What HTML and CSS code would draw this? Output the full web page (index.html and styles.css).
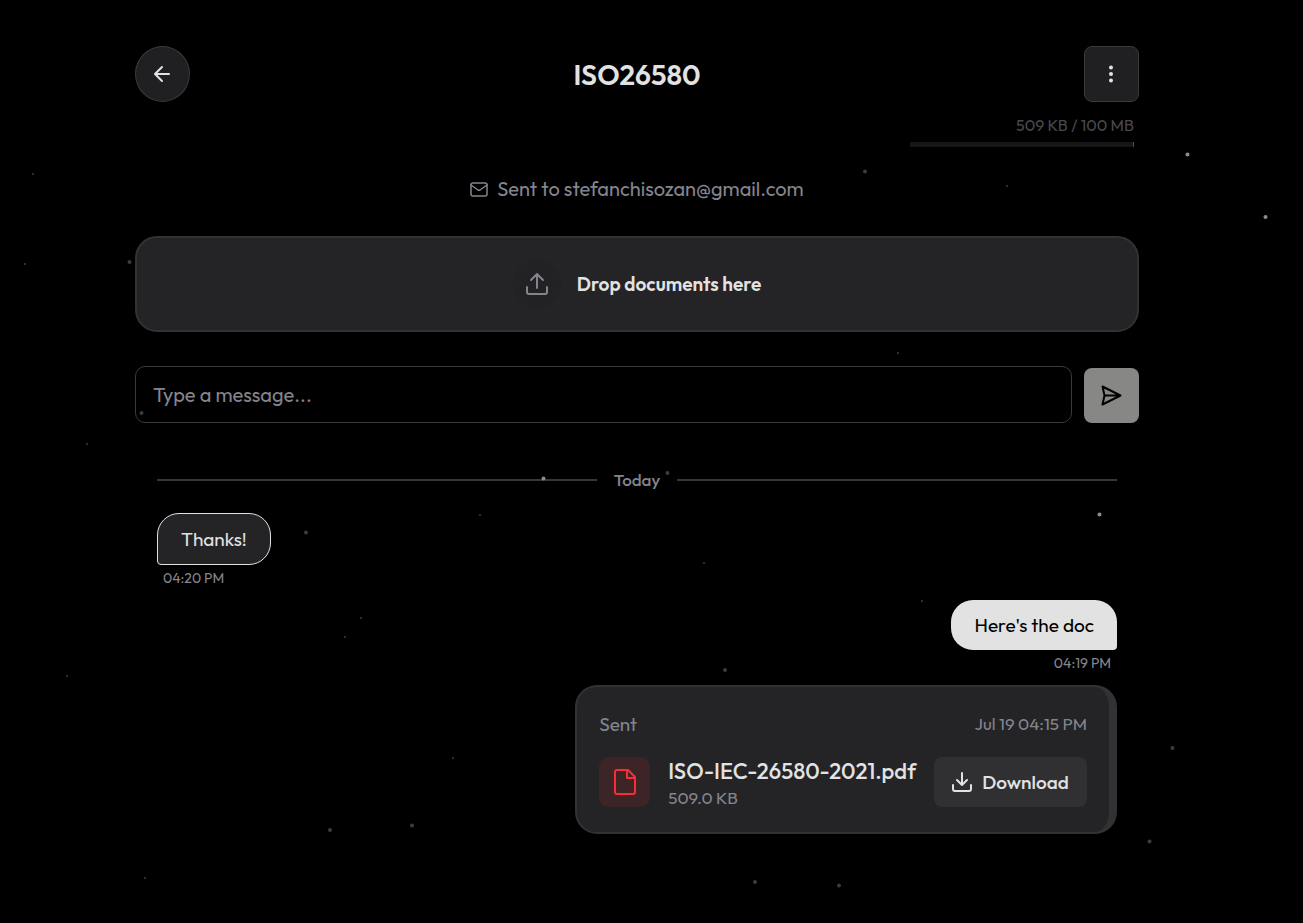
FILE: index.html
```html
<!DOCTYPE html>
<html lang="en">
  <head>
    <meta charset="utf-8">
    <meta name="viewport" content="width=device-width,initial-scale=1">
    <title>ISO26580</title>
    <link rel="stylesheet" href="styles.css">
  </head>
  <body>
    <svg class="stars" aria-hidden="true">
      <g class="bright">
        <circle cx="1187.5" cy="154.5" r="2"/>
        <circle cx="1265.5" cy="217" r="2"/>
        <circle cx="1099.5" cy="514.5" r="2"/>
        <circle cx="543.5" cy="478.5" r="2"/>
      </g>
      <g class="dim">
        <circle cx="865" cy="171.5" r="2"/>
        <circle cx="129.5" cy="262" r="2"/>
        <circle cx="141.5" cy="413" r="2"/>
        <circle cx="667.5" cy="473" r="2"/>
        <circle cx="306" cy="532.5" r="2"/>
        <circle cx="725" cy="670" r="2"/>
        <circle cx="1172.5" cy="748" r="2"/>
        <circle cx="330" cy="830" r="2"/>
        <circle cx="412" cy="825.5" r="2"/>
        <circle cx="755" cy="882" r="2"/>
        <circle cx="839" cy="885.5" r="2"/>
        <circle cx="1149.5" cy="841.5" r="2"/>
      </g>
      <g class="dim">
        <circle cx="33" cy="174" r="1"/>
        <circle cx="25" cy="264" r="1"/>
        <circle cx="87" cy="444" r="1"/>
        <circle cx="1007" cy="186" r="1"/>
        <circle cx="898" cy="353" r="1"/>
        <circle cx="480" cy="515" r="1"/>
        <circle cx="704" cy="563" r="1"/>
        <circle cx="361" cy="618" r="1"/>
        <circle cx="345" cy="637" r="1"/>
        <circle cx="922" cy="601" r="1"/>
        <circle cx="67" cy="676" r="1"/>
        <circle cx="453" cy="758" r="1"/>
        <circle cx="145" cy="878" r="1"/>
      </g>
    </svg>
    <main>
      <header>
        <button class="icon-button round" type="button" aria-label="Back">
          <svg width="20" height="20" viewBox="0 0 20 20"><path d="M16 10H2M9 3l-7 7 7 7"/></svg>
        </button>
        <h1>ISO26580</h1>
        <button class="icon-button" type="button" aria-label="Menu">
          <svg class="dots" width="20" height="20" viewBox="0 0 20 20"><circle cx="9" cy="3.5" r="2"/><circle cx="9" cy="10" r="2"/><circle cx="9" cy="16.5" r="2"/></svg>
        </button>
      </header>

      <div class="usage">
        <span>509 KB / 100 MB</span>
        <div class="usage-bar"><div class="usage-fill"></div></div>
      </div>

      <p class="recipient">
        <svg width="18" height="18" viewBox="0 0 18 18"><rect x="1" y="3" width="16" height="13" rx="2"/><path d="M1 5l7 5q1 .6 2 0l7-5"/></svg>
        Sent to stefanchisozan@gmail.com
      </p>

      <button class="drop-zone" type="button">
        <span class="drop-icon">
          <svg width="24" height="24" viewBox="0 0 24 24"><path d="M2 15v5q0 2 2 2h16q2 0 2-2v-5M12 16V2M6 8l6-6 6 6"/></svg>
        </span>
        Drop documents here
      </button>

      <form class="composer">
        <input type="text" placeholder="Type a message..." aria-label="Message">
        <button class="send" type="submit" aria-label="Send">
          <svg width="22" height="22" viewBox="0 0 22 22"><path d="M1.5 1.5l18 9-18 9 2-9zM3.5 10.5h16"/></svg>
        </button>
      </form>

      <section class="messages">
        <div class="day">Today</div>
        <div class="message received">
          <p class="bubble">Thanks!</p>
          <time>04:20 PM</time>
        </div>
        <div class="message sent">
          <p class="bubble">Here's the doc</p>
          <time>04:19 PM</time>
        </div>
        <article class="document">
          <div class="document-head">
            <span class="status">Sent</span>
            <time>Jul 19 04:15 PM</time>
          </div>
          <div class="document-body">
            <span class="file-icon">
              <svg width="28" height="28" viewBox="0 0 28 28"><path d="M4 4q0-2 2-2h11l7 7v15q0 2-2 2H6q-2 0-2-2zM16 2v8h8"/></svg>
            </span>
            <div class="file-info">
              <h2>ISO-IEC-26580-2021.pdf</h2>
              <p>509.0 KB</p>
            </div>
            <button class="download" type="button">
              <svg width="20" height="20" viewBox="0 0 20 20"><path d="M1 13v4q0 2 2 2h14q2 0 2-2v-4M10 1v12M5 8l5 5 5-5"/></svg>
              Download
            </button>
          </div>
        </article>
      </section>
    </main>
  </body>
</html>
```
FILE: styles.css
```css
:root {
    --background: #000000;
    --surface: #242426;
    --border: #323234;
    --text: #e2e2e2;
    --muted: #84848e;
}

* {
    box-sizing: border-box;
}

body {
    margin: 0;
    padding: 46px 29px 46px 0;
    min-height: 100vh;
    background-color: var(--background);
    color: var(--text);
    font-family: Outfit, Lato, sans-serif;
    font-size: 19px;
    line-height: 24px;
}

main {
    width: 100%;
    max-width: 1004px;
    margin: 0 auto;
}

h1, h2, p {
    margin: 0;
}

button, input {
    font: inherit;
    color: inherit;
}

button {
    display: flex;
    align-items: center;
    justify-content: center;
    padding: 0;
    border: none;
    cursor: pointer;
}

svg {
    flex: none;
    fill: none;
    stroke: currentColor;
    stroke-width: 2;
    stroke-linecap: round;
    stroke-linejoin: round;
}

/* Star field over the whole window */
.stars {
    position: fixed;
    top: 0;
    left: 0;
    width: 100%;
    height: 100%;
    stroke: none;
    pointer-events: none;
}

.bright {
    fill: #8c8c8c;
}

.dim {
    fill: #3c3c3c;
}

header {
    display: flex;
    align-items: center;
    justify-content: space-between;
}

h1 {
    padding-top: 2px;
    font-size: 28px;
    line-height: 36px;
    font-weight: 600;
}

.icon-button {
    width: 55px;
    height: 56px;
    background-color: #202022;
    border: 1px solid #3a3a3c;
    border-radius: 8px;
}

.round {
    border-radius: 50%;
}

.dots {
    fill: currentColor;
    stroke: none;
}

.usage {
    display: flex;
    flex-direction: column;
    align-items: flex-end;
    gap: 5px;
    padding: 11px 5px 0 0;
    color: #484850;
    font-size: 16px;
}

.usage-bar {
    width: 224px;
    height: 5px;
    background-color: #161618;
}

.usage-fill {
    width: 1px;
    height: 5px;
    margin-left: auto;
    background-color: #505054;
}

.recipient {
    display: flex;
    align-items: center;
    justify-content: center;
    gap: 9px;
    margin: 30px 0 35px;
    color: var(--muted);
    font-size: 20px;
}

.recipient svg {
    stroke-width: 1.5;
}

.drop-zone {
    width: 100%;
    height: 96px;
    gap: 16px;
    background-color: var(--surface);
    border: 2px solid var(--border);
    border-radius: 22px;
    font-weight: 600;
}

.drop-icon {
    display: flex;
    align-items: center;
    justify-content: center;
    width: 48px;
    height: 48px;
    border-radius: 50%;
    background-color: #222224;
    color: var(--muted);
}

.composer {
    display: flex;
    align-items: flex-end;
    gap: 12px;
    margin-top: 34px;
}

.composer input {
    flex: 1;
    min-width: 0;
    height: 57px;
    padding: 0 17px;
    background: transparent;
    border: 1px solid #3a3a3c;
    border-radius: 10px;
    font-size: 20px;
}

.composer input::placeholder {
    color: var(--muted);
    opacity: 1;
}

.send {
    width: 55px;
    height: 55px;
    background-color: #878785;
    border-radius: 8px;
    color: #000000;
}

.messages {
    display: flex;
    flex-direction: column;
    padding: 45px 22px 0;
}

.day {
    display: flex;
    align-items: center;
    gap: 17px;
    margin-bottom: 21px;
    color: var(--muted);
    font-size: 17px;
    font-weight: 500;
}

.day::before, .day::after {
    content: "";
    flex: 1;
    height: 2px;
    background-color: #38383c;
}

.message {
    display: flex;
    flex-direction: column;
    align-items: flex-start;
}

.message time {
    padding: 4px 6px 0;
    color: var(--muted);
    font-size: 14px;
    line-height: 18px;
}

.bubble {
    padding: 13px 23px;
    border-radius: 22px;
}

.received {
    margin-bottom: 13px;
}

.received .bubble {
    background-color: var(--surface);
    border: 1px solid var(--text);
    border-bottom-left-radius: 4px;
}

.sent {
    align-items: flex-end;
    margin-bottom: 13px;
}

.sent .bubble {
    background-color: var(--text);
    border-bottom-right-radius: 4px;
    color: #000000;
}

.document {
    align-self: flex-end;
    padding: 25px 22px 23px;
    background-color: var(--surface);
    border: 2px solid var(--border);
    border-right-width: 8px;
    border-radius: 22px;
}

.document-head {
    display: flex;
    align-items: center;
    justify-content: space-between;
    margin-bottom: 19px;
    color: var(--muted);
}

.document-head time {
    font-size: 17px;
}

.document-body {
    display: flex;
    align-items: center;
    gap: 18px;
}

.file-icon {
    display: flex;
    align-items: center;
    justify-content: center;
    width: 51px;
    height: 50px;
    border-radius: 10px;
    background-color: #3c2427;
    color: #fb2c36;
}

.file-info h2 {
    font-size: 22px;
    line-height: 32px;
    font-weight: 500;
}

.file-info p {
    color: var(--muted);
    font-size: 17px;
    line-height: 22px;
}

.download {
    width: 153px;
    height: 50px;
    gap: 10px;
    background-color: #303032;
    border-radius: 8px;
    font-weight: 500;
}
```
